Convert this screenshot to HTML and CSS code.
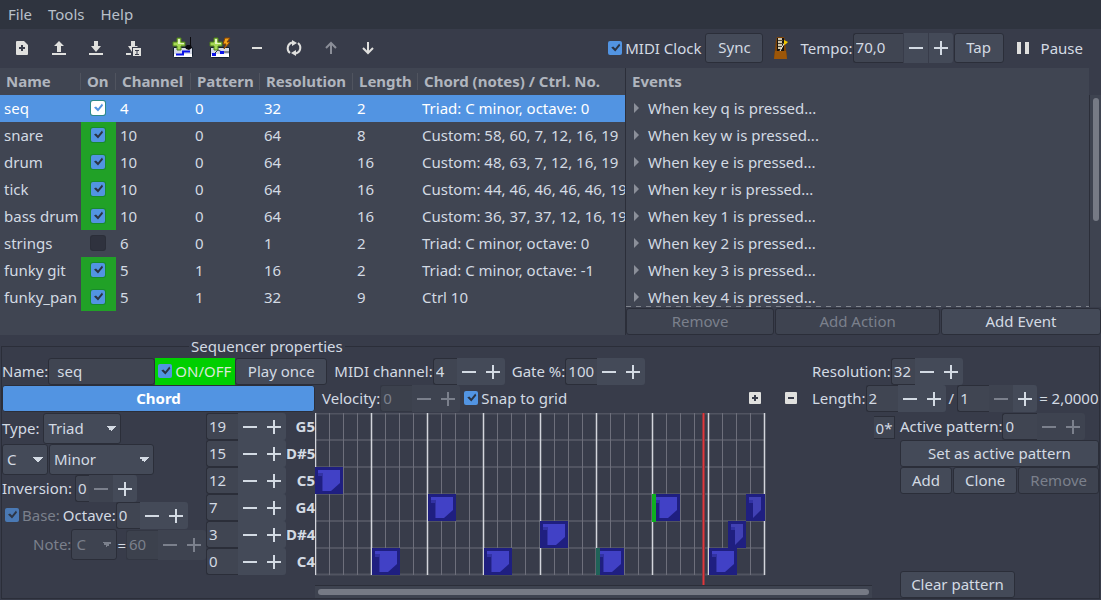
FILE: index.html
```html
<!DOCTYPE html>
<html lang="en">
<head>
<meta charset="utf-8">
<title>Sequencer</title>
<link rel="stylesheet" href="styles.css">
</head>
<body>
<nav class="menubar">
  <button class="menu">File</button><button class="menu">Tools</button><button class="menu">Help</button>
</nav>

<header class="toolbar">
  <div class="tools">
    <button class="tool" aria-label="New"><svg width="16" height="16"><path d="M4 1h6l4 4v9a1 1 0 0 1-1 1H3a1 1 0 0 1-1-1V2a1 1 0 0 1 1-1z" fill="#e0e0de"/><path d="M8 5v6M5 8h6" stroke="#383c4a" stroke-width="2"/></svg></button>
    <button class="tool" aria-label="Open"><svg width="16" height="16"><path d="M8 1l5 5h-3v6H6V6H3zM1 13h14v2H1z" fill="#e0e0de"/></svg></button>
    <button class="tool" aria-label="Save"><svg width="16" height="16"><path d="M6 1h4v5h3l-5 6-5-6h3zM1 13h14v2H1z" fill="#e0e0de"/></svg></button>
    <button class="tool" aria-label="Save as"><svg width="16" height="16"><path d="M6 1h4v5h3l-1 1H7v5L3 6h3zM1 13h5v2H1z" fill="#e0e0de"/><path d="M8 8h8v8H8z" fill="#e0e0de"/><path d="M10 10.500h4M10 14.500h4M12 10v5" stroke="#383c4a"/></svg></button>
    <span class="tool-gap"></span>
    <button class="tool" aria-label="Add sequencer"><svg width="22" height="22"><path d="M1.500 10.500h19v9q0 1-1 1h-17q-1 0-1-1z" fill="#d5d9e6" stroke="#14202e"/><path d="M2 17h18v3H2z" fill="#fff"/><path d="M4 17.500h7v-3h7" fill="none" stroke="#0a12e8" stroke-width="2"/><path d="M18 0h1v8l1 3-3 2-3-1-1-2 2-2h3z" fill="#0b0b0f"/><path d="M5 1h4v4h4v4H9v4H5V9H1V5h4z" fill="#a5d854" stroke="#4d7f1c"/><path d="M6 2h2v4h4v1H6z" fill="#e3f5c0"/></svg></button>
    <button class="tool" aria-label="Add controller sequencer"><svg width="22" height="22"><path d="M1.500 10.500h19v9q0 1-1 1h-17q-1 0-1-1z" fill="#d5d9e6" stroke="#14202e"/><path d="M2 17h18v3H2z" fill="#fff"/><path d="M5 17l4-4 4 2h7" fill="none" stroke="#30343c"/><path d="M3 16h4v3H3zM11 14h4v3h-4z" fill="#0a12e8"/><path d="M16 1h5l-3 4h3l-6 7 2-5h-3z" fill="#f3a61c" stroke="#8a4300"/><path d="M5 1h4v4h4v4H9v4H5V9H1V5h4z" fill="#a5d854" stroke="#4d7f1c"/><path d="M6 2h2v4h4v1H6z" fill="#e3f5c0"/></svg></button>
    <button class="tool" aria-label="Remove"><svg width="16" height="16"><path d="M3 7h10v2H3z" fill="#e0e0de"/></svg></button>
    <button class="tool" aria-label="Randomise"><svg width="16" height="16"><path d="M4 13A6 6 0 0 1 6 2.500M12 3a6 6 0 0 1-2 10.500" fill="none" stroke="#e0e0de" stroke-width="2"/><path d="M6 0l5 3-5 3zM10 10v6l-5-3z" fill="#e0e0de"/></svg></button>
    <button class="tool" aria-label="Move up" disabled><svg width="16" height="16"><path d="M8 14V4M3 8l5-5 5 5" fill="none" stroke="#8b8e98" stroke-width="2"/></svg></button>
    <button class="tool" aria-label="Move down"><svg width="16" height="16"><path d="M8 2v10M3 8l5 5 5-5" fill="none" stroke="#e0e0de" stroke-width="2"/></svg></button>
  </div>
  <div class="transport">
    <label class="check"><input type="checkbox" checked>MIDI Clock</label>
    <button class="btn sync">Sync</button>
    <svg class="metronome" width="18" height="24"><path d="M5 1h7l1 3 2 19H2L4 4z" fill="#7d4206"/><path d="M3 15h11l1 8H2z" fill="#9c5608"/><path d="M5 2h7v13H5z" fill="#17140f"/><path d="M6 2h4v11H6z" fill="#cfc6ac"/><path d="M6 4.500h5M6 7.500h5M6 10.500h5" stroke="#4d4534"/><path d="M8 15l5-9" stroke="#f2f0e8"/><path d="M12 4l2 1 2 1-2 2-2 1z" fill="#f0c800"/></svg>
    <label for="tempo">Tempo:</label>
    <span class="spin large"><input id="tempo" class="w50" value="70,0"><button class="minus" aria-label="Slower"></button><button class="plus" aria-label="Faster"></button></span>
    <button class="btn tap">Tap</button>
    <button class="pause"><svg width="12" height="12"><path d="M0 0h4v12H0zM8 0h4v12H8z" fill="#e0e0de"/></svg>Pause</button>
  </div>
</header>

<main class="split">
  <section class="sequencers">
    <table class="seqs">
      <colgroup><col class="c-name"><col class="c-on"><col class="c-chan"><col class="c-pat"><col class="c-res"><col class="c-len"><col class="c-chord"></colgroup>
      <thead><tr><th>Name</th><th>On</th><th>Channel</th><th>Pattern</th><th>Resolution</th><th>Length</th><th>Chord (notes) / Ctrl. No.</th></tr></thead>
      <tbody>
        <tr class="selected"><td>seq</td><td><input type="checkbox" aria-label="seq on" checked></td><td>4</td><td>0</td><td>32</td><td>2</td><td>Triad: C minor, octave: 0</td></tr>
        <tr><td>snare</td><td class="on"><input type="checkbox" aria-label="snare on" checked></td><td>10</td><td>0</td><td>64</td><td>8</td><td>Custom: 58, 60, 7, 12, 16, 19</td></tr>
        <tr><td>drum</td><td class="on"><input type="checkbox" aria-label="drum on" checked></td><td>10</td><td>0</td><td>64</td><td>16</td><td>Custom: 48, 63, 7, 12, 16, 19</td></tr>
        <tr><td>tick</td><td class="on"><input type="checkbox" aria-label="tick on" checked></td><td>10</td><td>0</td><td>64</td><td>16</td><td>Custom: 44, 46, 46, 46, 46, 19</td></tr>
        <tr><td>bass drum</td><td class="on"><input type="checkbox" aria-label="bass drum on" checked></td><td>10</td><td>0</td><td>64</td><td>16</td><td>Custom: 36, 37, 37, 12, 16, 19</td></tr>
        <tr><td>strings</td><td><input type="checkbox" aria-label="strings on"></td><td>6</td><td>0</td><td>1</td><td>2</td><td>Triad: C minor, octave: 0</td></tr>
        <tr><td>funky git</td><td class="on"><input type="checkbox" aria-label="funky git on" checked></td><td>5</td><td>1</td><td>16</td><td>2</td><td>Triad: C minor, octave: -1</td></tr>
        <tr><td>funky_pan</td><td class="on"><input type="checkbox" aria-label="funky_pan on" checked></td><td>5</td><td>1</td><td>32</td><td>9</td><td>Ctrl 10</td></tr>
      </tbody>
    </table>
  </section>
  <section class="events">
    <div class="events-body">
      <div class="events-main">
        <h2>Events</h2>
        <ul class="event-list">
          <li>When key q is pressed...</li><li>When key w is pressed...</li><li>When key e is pressed...</li><li>When key r is pressed...</li><li>When key 1 is pressed...</li><li>When key 2 is pressed...</li><li>When key 3 is pressed...</li><li>When key 4 is pressed...</li>
        </ul>
      </div>
      <div class="vscroll"><div class="thumb"></div></div>
    </div>
    <div class="event-buttons">
      <button class="btn b-remove" disabled>Remove</button><button class="btn b-action" disabled>Add Action</button><button class="btn b-event">Add Event</button>
    </div>
  </section>
</main>

<fieldset class="props">
  <legend>Sequencer properties</legend>
  <div class="row">
    <label for="name">Name:</label>
    <input id="name" class="entry" value="seq">
    <label class="check onoff"><input type="checkbox" checked>ON/OFF</label>
    <button class="btn once">Play once</button>
    <label class="lead" for="chan">MIDI channel:</label>
    <span class="spin"><input id="chan" class="w24" value="4"><button class="minus" aria-label="Decrease channel"></button><button class="plus" aria-label="Increase channel"></button></span>
    <label class="lead" for="gate">Gate %:</label>
    <span class="spin"><input id="gate" class="w32" value="100"><button class="minus" aria-label="Decrease gate"></button><button class="plus" aria-label="Increase gate"></button></span>
    <div class="side">
      <label for="res">Resolution:</label>
      <span class="spin"><input id="res" class="w24" value="32"><button class="minus" aria-label="Decrease resolution"></button><button class="plus" aria-label="Increase resolution"></button></span>
    </div>
  </div>
  <div class="row">
    <button class="btn chord">Chord</button>
    <label class="lead" for="vel">Velocity:</label>
    <span class="spin"><input id="vel" class="w32" value="0" disabled><button class="minus" aria-label="Decrease velocity" disabled></button><button class="plus" aria-label="Increase velocity" disabled></button></span>
    <label class="check snap"><input type="checkbox" checked>Snap to grid</label>
    <div class="zoom-buttons">
      <button class="square" aria-label="Zoom in"><svg width="12" height="12"><rect width="12" height="12" rx="1" fill="#e0e0de"/><path d="M6 3v6M3 6h6" stroke="#383c4a" stroke-width="2"/></svg></button>
      <button class="square" aria-label="Zoom out"><svg width="12" height="12"><rect width="12" height="12" rx="1" fill="#e0e0de"/><path d="M3 6h6" stroke="#383c4a" stroke-width="2"/></svg></button>
    </div>
    <div class="side">
      <label for="len">Length:</label>
      <span class="spin"><input id="len" class="w32" value="2"><button class="minus" aria-label="Decrease length"></button><button class="plus" aria-label="Increase length"></button></span>
      <span class="slash">/</span>
      <span class="spin"><input class="w32" aria-label="Length divisor" value="1"><button class="minus" aria-label="Decrease divisor" disabled></button><button class="plus" aria-label="Increase divisor"></button></span>
      <span class="equals">= 2,0000</span>
    </div>
  </div>

  <div class="editor">
    <div class="voice">
      <div class="line tall"><label for="type">Type:</label><select id="type" class="s-type"><option>Triad</option></select></div>
      <div class="line tall"><select class="s-key" aria-label="Key"><option>C</option></select><select class="s-scale" aria-label="Scale"><option>Minor</option></select></div>
      <div class="line"><label for="inv">Inversion:</label><span class="spin"><input id="inv" class="w14" value="0"><button class="minus" aria-label="Decrease inversion" disabled></button><button class="plus" aria-label="Increase inversion"></button></span></div>
      <div class="line tight"><label class="check dim"><input type="checkbox" checked disabled>Base:</label><label class="octave" for="oct">Octave:</label><span class="spin"><input id="oct" class="w24" value="0"><button class="minus" aria-label="Decrease octave"></button><button class="plus" aria-label="Increase octave"></button></span></div>
      <div class="line tall note"><label class="dim" for="note">Note:</label><select id="note" class="s-note" disabled><option>C</option></select><span>=</span><span class="spin large"><input class="w32" aria-label="Note number" value="60" disabled><button class="minus" aria-label="Decrease note" disabled></button><button class="plus" aria-label="Increase note" disabled></button></span></div>
    </div>
    <div class="pitches">
      <div class="pitch"><span class="spin"><input id="p1" class="w32" value="19"><button class="minus" aria-label="Lower"></button><button class="plus" aria-label="Raise"></button></span><label for="p1">G5</label></div>
      <div class="pitch"><span class="spin"><input id="p2" class="w32" value="15"><button class="minus" aria-label="Lower"></button><button class="plus" aria-label="Raise"></button></span><label for="p2">D#5</label></div>
      <div class="pitch"><span class="spin"><input id="p3" class="w32" value="12"><button class="minus" aria-label="Lower"></button><button class="plus" aria-label="Raise"></button></span><label for="p3">C5</label></div>
      <div class="pitch"><span class="spin"><input id="p4" class="w32" value="7"><button class="minus" aria-label="Lower"></button><button class="plus" aria-label="Raise"></button></span><label for="p4">G4</label></div>
      <div class="pitch"><span class="spin"><input id="p5" class="w32" value="3"><button class="minus" aria-label="Lower"></button><button class="plus" aria-label="Raise"></button></span><label for="p5">D#4</label></div>
      <div class="pitch"><span class="spin"><input id="p6" class="w32" value="0"><button class="minus" aria-label="Lower"></button><button class="plus" aria-label="Raise"></button></span><label for="p6">C4</label></div>
    </div>
    <div class="roll">
      <svg width="451" height="172" role="img" aria-label="Pattern notes">
        <defs>
          <g id="n"><path d="M0 0h28v27H0z" fill="#1f1f80"/><path d="M3 3h22v13l-9 8H7V9H3z" fill="#4141c6"/><path d="M3 6h4v3H3zM7 6h1v18H7z" fill="#3232a4"/></g>
          <g id="s"><path d="M0 0h18v27H0z" fill="#1f1f80"/><path d="M3 3h12v13l-8 8V9H3z" fill="#4141b4"/><path d="M3 6h4v3H3z" fill="#3232a4"/></g>
        </defs>
        <path d="M0 .5h450M0 27h450M0 54h450M0 81h450M0 108h450M0 135h450M0 161.500h450" stroke="#515461" stroke-width="2"/>
        <path d="M14.500 0v162M28.500 0v162M42.500 0v162M70.500 0v162M84.500 0v162M98.500 0v162M126.500 0v162M140.500 0v162M154.500 0v162M182.500 0v162M196.500 0v162M210.500 0v162M239.500 0v162M253.500 0v162M267.500 0v162M295.500 0v162M309.500 0v162M323.500 0v162M351.500 0v162M365.500 0v162M379.500 0v162M407.500 0v162M421.500 0v162M435.500 0v162" stroke="#6d6f7b"/>
        <path d="M.5 0v162M56.500 0v162M112.500 0v162M168.500 0v162M225.500 0v162M281.500 0v162M337.500 0v162M393.500 0v162M449.500 0v162" stroke="#d3d5dc" stroke-width="1.500"/>
        <use href="#n" x="0" y="54"/><use href="#n" x="57" y="135"/><use href="#n" x="113" y="81"/><use href="#n" x="169" y="135"/><use href="#n" x="225" y="108"/><use href="#n" x="281" y="135"/><use href="#n" x="337" y="81"/><use href="#n" x="394" y="135"/><use href="#s" x="413" y="108"/><use href="#s" x="431" y="81"/>
        <path d="M449 81h1v27h-1z" fill="#1f1f80"/>
        <path d="M281 135h4v27h-4z" fill="#1f6258"/><path d="M337 81h4v28h-4z" fill="#0fb020"/>
        <path d="M388.500 0v172" stroke="#8d3740" stroke-width="3"/><path d="M388.500 0v172" stroke="#e0373a"/>
      </svg>
      <div class="hscroll"><div class="thumb"></div></div>
    </div>
    <button class="tab">0*</button>
    <div class="patterns">
      <div class="line"><label for="active">Active pattern:</label><span class="spin"><input id="active" class="w35" value="0"><button class="minus" aria-label="Previous pattern" disabled></button><button class="plus" aria-label="Next pattern" disabled></button></span></div>
      <button class="btn">Set as active pattern</button>
      <div class="trio"><button class="btn">Add</button><button class="btn">Clone</button><button class="btn" disabled>Remove</button></div>
      <button class="btn clear">Clear pattern</button>
    </div>
  </div>
</fieldset>
</body>
</html>
```
FILE: styles.css
```css
:root {
  --bg: #383c4a;
  --base: #404552;
  --button: #444a58;
  --off: #3e4350;
  --edge: #2b2e39;
  --text: #d3dae3;
  --dim: #7b808c;
  --blue: #5294e2;
}
* { box-sizing: border-box; }
body {
  margin: 0;
  min-height: 100vh;
  display: flex;
  flex-direction: column;
  background: var(--bg);
  color: var(--text);
  font: 15px/20px "Noto Sans", sans-serif;
  white-space: nowrap;
}
button, input, select { font: inherit; color: inherit; margin: 0; }
button { padding: 0; border: 0; background: none; }
label { padding-bottom: 2px; }
svg { display: block; flex: none; }

.menubar { display: flex; height: 29px; background: #2f343f; }
.menu { padding: 0 8px 2px; color: #b9c0ca; }

.toolbar {
  display: flex;
  justify-content: space-between;
  align-items: center;
  height: 39px;
  padding: 0 18px 2px 3px;
}
.tools, .transport { display: flex; align-items: center; }
.transport label { padding-bottom: 0; }
.tool { width: 37px; height: 37px; display: grid; place-items: center; }
.tool-gap { width: 13px; }

.btn {
  height: 27px;
  padding: 0 0 2px;
  background: var(--button);
  border: 1px solid var(--edge);
  border-radius: 3px;
}
.btn:disabled { background: var(--off); color: var(--dim); }
.sync, .tap { height: 30px; }
.sync { width: 58px; margin: 0 9px 0 4px; }
.tap { width: 50px; margin: 0 13px 0 1px; }
.metronome { margin-right: 10px; }
.pause { display: flex; align-items: center; gap: 12px; }

.check { display: flex; align-items: center; gap: 3px; }
input[type="checkbox"] {
  appearance: none;
  display: block;
  flex: none;
  width: 14px;
  height: 14px;
  border-radius: 2px;
  background: #2f323e;
  box-shadow: 0 0 0 1px #2b2e39;
}
input[type="checkbox"]:checked { background: var(--blue); box-shadow: none; }
input[type="checkbox"]:checked::before {
  content: "";
  display: block;
  width: 14px;
  height: 14px;
  background: #2b3444;
  clip-path: polygon(3px 7px, 5px 6px, 7px 8px, 11px 3px, 12px 5px, 7px 11px);
}

.spin { display: flex; height: 27px; }
.spin input {
  min-width: 0;
  padding: 0 0 2px 2px;
  background: var(--base);
  border: 1px solid var(--edge);
  border-right: 0;
  border-radius: 3px 0 0 3px;
}
.spin button { width: 24px; display: grid; place-items: center; background: var(--button); color: var(--text); }
.spin button:last-child { border-radius: 0 3px 3px 0; }
.spin button:disabled { background: var(--off); color: var(--dim); }
.spin input:disabled { background: #3c414d; color: var(--dim); border-color: #333743; }
.large { height: 30px; }
.transport .spin button { width: 25px; border-left: 1px solid var(--bg); }
.minus::before, .plus::before {
  content: "";
  width: 14px;
  height: 14px;
  background: linear-gradient(currentColor, currentColor) center / 14px 2px no-repeat;
}
.plus::before {
  background:
    linear-gradient(currentColor, currentColor) center / 14px 2px no-repeat,
    linear-gradient(currentColor, currentColor) center / 2px 14px no-repeat;
}
.w14 { width: 14px; }
.w24 { width: 24px; }
.w32 { width: 32px; }
.w35 { width: 35px; }
.w50 { width: 50px; }

.split { display: flex; flex: 1; }
.sequencers { background: var(--base); padding-bottom: 24px; }
.seqs { width: 625px; table-layout: fixed; border-collapse: collapse; }
.c-name { width: 81px; }
.c-on { width: 35px; }
.c-chan { width: 75px; }
.c-pat { width: 69px; }
.c-res { width: 93px; }
.c-len { width: 65px; }
.seqs tr { height: 27px; }
.seqs th {
  padding: 0 0 2px 6px;
  text-align: left;
  color: #b0b5be;
  background: linear-gradient(#50545f, #50545f) right / 1px 17px no-repeat;
}
.seqs th:last-child { background: none; }
.seqs td { padding: 0 0 2px 4px; }
.seqs td:nth-child(2) { padding-left: 10px; }
.selected { background: var(--blue); color: #fff; }
.on { background: #21a127; }
.on input[type="checkbox"]:checked { box-shadow: 0 0 0 1px #188a2c; }
.selected input[type="checkbox"]:checked { background: #fff; box-shadow: 0 0 0 1px #2d8a8a; }
.selected input[type="checkbox"]:checked::before { background: var(--blue); }

.events { flex: 1; display: flex; flex-direction: column; border-left: 1px solid var(--edge); }
.events-body { flex: 1; display: flex; min-height: 0; }
.events-main { flex: 1; display: flex; flex-direction: column; background: var(--base); }
.events h2 { margin: 0; padding-left: 6px; font-size: 15px; line-height: 27px; color: #b0b5be; }
.event-list {
  flex: 1 1 0;
  min-height: 0;
  overflow: hidden;
  margin: 0;
  padding: 0;
  list-style: none;
  background: repeating-linear-gradient(to right, #80848d 0 5px, transparent 5px 10px) bottom / 100% 1px no-repeat;
}
.event-list li { display: flex; align-items: center; height: 27px; padding: 0 0 2px 8px; gap: 9px; }
.event-list li::before { content: ""; border: 5px solid transparent; border-left-color: #8b8f99; border-right: 0; }
.vscroll { width: 12px; margin-top: 27px; padding: 3px 1px 0 3px; background: #3e4350; border-left: 1px solid var(--edge); }
.vscroll .thumb { width: 6px; height: 123px; border-radius: 3px; background: #767a85; }
.event-buttons { display: flex; gap: 1px; padding-top: 1px; }
.b-remove { flex: 148; }
.b-action { flex: 165; }
.b-event { flex: 160; }

.props {
  min-width: 0;
  margin: 0 1px 1px;
  padding: 0;
  border: 1px solid var(--edge);
}
.props legend { margin-left: 187px; padding: 0 2px; line-height: 23px; }
.row { display: flex; align-items: center; height: 27px; }
.row .lead { margin-left: 7px; }
.side { width: 287px; margin-left: auto; display: flex; align-items: center; }
.entry {
  width: 107px;
  height: 27px;
  padding: 0 0 2px 8px;
  background: var(--base);
  border: 1px solid var(--edge);
  border-radius: 3px;
}
.onoff { height: 27px; padding: 0 4px 2px 3px; background: #00cf00; color: #d9ead9; }
.once { width: 92px; }
.chord { width: 313px; background: var(--blue); color: #fff; font-weight: bold; }
.snap { margin-left: 4px; }
.zoom-buttons { flex: 1; display: flex; justify-content: flex-end; padding-right: 3px; }
.square { width: 36px; height: 27px; padding-bottom: 2px; display: grid; place-items: center; }
.slash { margin: 0 3px; padding-bottom: 2px; }
.equals { margin-left: 2px; padding-bottom: 2px; }

.editor { display: flex; padding-top: 1px; }
.voice { width: 204px; }
.line { display: flex; align-items: center; gap: 3px; height: 27px; }
.tall { height: 31px; gap: 1px; }
.tight { gap: 0; }
.voice > .line:first-child { gap: 4px; }
.octave { margin-left: 3px; }
.dim { color: var(--dim); }
.dim input[type="checkbox"] { opacity: .7; }
.tight .check { padding-left: 3px; }
.note { padding-left: 31px; gap: 0; }
select {
  appearance: none;
  height: 31px;
  padding: 0 5px 2px 4px;
  border: 1px solid var(--edge);
  border-radius: 3px;
  background: var(--button) conic-gradient(from -45deg at 50% 100%, var(--text) 90deg, transparent 0) right 5px center / 10px 5px no-repeat;
  background-image: conic-gradient(from -63deg at 50% 100%, var(--text) 126deg, transparent 0);
}
select {
  background-image: linear-gradient(to bottom left, var(--text) 50%, transparent 50%), linear-gradient(to bottom right, var(--text) 50%, transparent 50%);
  background-position: right 9px center, right 4px center;
  background-size: 5px 5px;
}
select:disabled {
  opacity: 1;
  color: var(--dim);
  background-color: var(--off);
  background-image: linear-gradient(to bottom left, var(--dim) 50%, transparent 50%), linear-gradient(to bottom right, var(--dim) 50%, transparent 50%);
}
.s-type { width: 78px; }
.s-key, .s-note { width: 46px; }
.s-scale { width: 105px; }

.pitches { width: 109px; }
.pitch { display: flex; align-items: center; height: 27px; }
.pitch label { flex: 1; text-align: right; font-weight: bold; }
.roll { flex: 1; min-width: 0; display: flex; flex-direction: column; }
.hscroll { height: 13px; padding: 3px; border-top: 1px solid var(--edge); background: #3e4350; }
.hscroll .thumb { height: 6px; border-radius: 3px; background: #767a85; }
.tab { align-self: flex-start; width: 21px; height: 23px; margin: 3px 5px 0 2px; background: var(--base); border: 1px solid var(--edge); border-left: 0; }
.patterns { width: 199px; display: flex; flex-direction: column; }
.patterns .line { gap: 0; }
.trio { display: flex; gap: 1px; }
.trio .btn { flex: 1 1 auto; }
.clear { width: 115px; margin-top: auto; }
```
